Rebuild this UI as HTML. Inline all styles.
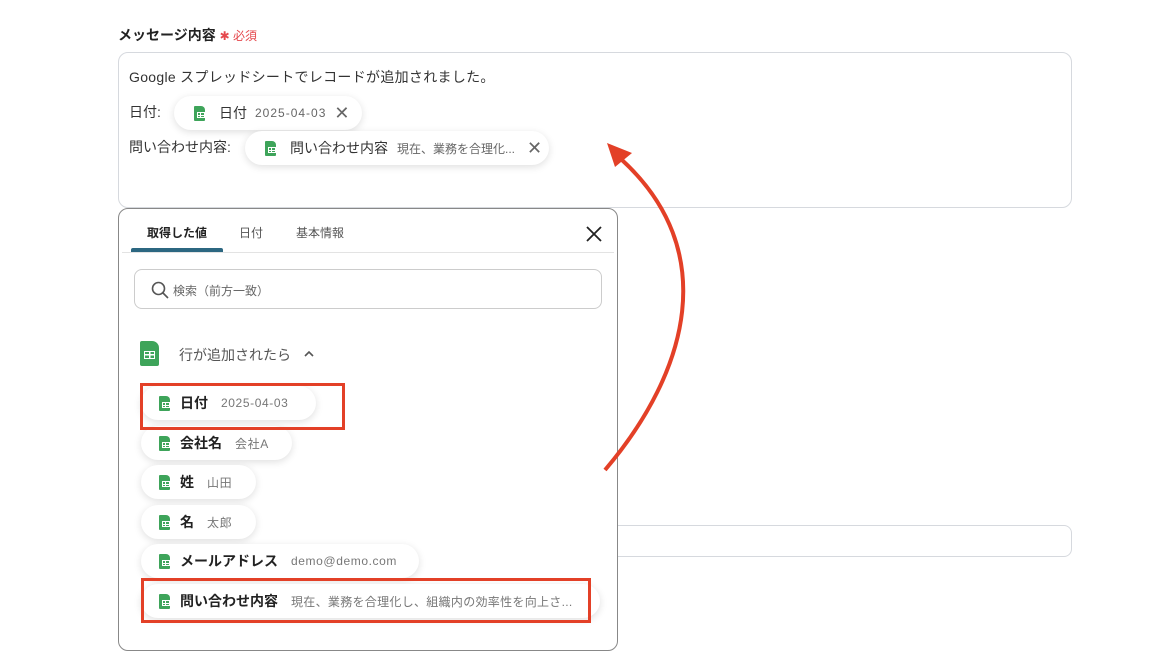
<!DOCTYPE html><html><head><meta charset="utf-8"><style>
*{box-sizing:border-box;margin:0;padding:0}
body{width:1154px;height:668px;background:#fff;font-family:"Liberation Sans","Noto Sans CJK JP",sans-serif;position:relative;overflow:hidden;color:#333}
.a{position:absolute}
.chip{position:absolute;height:34px;border-radius:17px;background:#fff;box-shadow:0 2px 8px rgba(0,0,0,.13);display:flex;align-items:center;white-space:nowrap}
.ic{display:inline-block;width:11px;height:15px;background:#3ea45a;border-radius:1px 4px 1px 1px;position:relative;flex:none}
.ic:after{content:"";position:absolute;left:2.5px;top:6.5px;width:6px;height:4px;border:1px solid #fff;background:linear-gradient(#fff,#fff) 50% 0/1px 100% no-repeat,linear-gradient(#fff,#fff) 0 50%/100% 1px no-repeat}
.k{font-weight:bold;font-size:14px;color:#222;margin-left:10px}
.v{font-size:12px;color:#777;margin-left:13px;letter-spacing:.6px}
.red{position:absolute;border:3px solid #e34027}
</style></head><body>
<div class="a" style="left:118px;top:25px;font-size:14px;font-weight:bold;color:#222">メッセージ内容 <span style="color:#e5484d;font-size:12px;font-weight:normal">✱ 必須</span></div>
<div class="a" style="left:118px;top:52px;width:954px;height:156px;border:1px solid #d6d9de;border-radius:10px"></div>
<div class="a" style="left:129px;top:67px;font-size:14px;color:#333;letter-spacing:.3px">Google スプレッドシートでレコードが追加されました。</div>
<div class="a" style="left:129px;top:102px;font-size:14px">日付:</div>
<div class="chip" style="left:174px;top:96px;width:188px;padding-left:20px"><span class="ic"></span><span style="margin-left:14px;font-size:14px">日付</span><span style="margin-left:8px;font-size:12px;color:#666;letter-spacing:1px">2025-04-03</span><span style="margin-left:8px;font-size:18px;color:#666">✕</span></div>
<div class="a" style="left:129px;top:137px;font-size:14px">問い合わせ内容:</div>
<div class="chip" style="left:245px;top:131px;width:304px;padding-left:20px"><span class="ic"></span><span style="margin-left:14px;font-size:14px">問い合わせ内容</span><span style="margin-left:9px;font-size:12px;color:#666">現在、業務を合理化...</span><span style="margin-left:12px;font-size:18px;color:#666">✕</span></div>
<div class="a" style="left:600px;top:525px;width:472px;height:32px;border:1px solid #d6d9de;border-radius:8px"></div>
<div class="a" style="left:118px;top:208px;width:500px;height:443px;border:1px solid #888;border-radius:10px;background:#fff"></div>
<div class="a" style="left:147px;top:224px;font-size:12px;font-weight:bold;color:#222">取得した値</div>
<div class="a" style="left:239px;top:224px;font-size:12px;color:#555">日付</div>
<div class="a" style="left:296px;top:224px;font-size:12px;color:#555">基本情報</div>
<div class="a" style="left:131px;top:248px;width:92px;height:4px;background:#2c6781;border-radius:2px 2px 0 0"></div>
<div class="a" style="left:122px;top:252px;width:492px;height:1px;background:#e3e3e3"></div>
<svg class="a" style="left:585px;top:225px" width="18" height="18"><path d="M2 2L16 16M16 2L2 16" stroke="#222" stroke-width="1.8"/></svg>
<div class="a" style="left:134px;top:269px;width:468px;height:40px;border:1px solid #ccc;border-radius:8px"></div>
<svg class="a" style="left:151px;top:281px" width="18" height="18"><circle cx="7.5" cy="7.5" r="6" fill="none" stroke="#555" stroke-width="1.6"/><path d="M12 12L17 17" stroke="#555" stroke-width="1.6"/></svg>
<div class="a" style="left:173px;top:282px;font-size:12px;color:#666">検索（前方一致）</div>
<div class="a" style="left:140px;top:341px;width:19px;height:25px;background:#3ea45a;border-radius:2px 7px 2px 2px"><div style="position:absolute;left:4px;top:10px;width:11px;height:8px;border:1.5px solid #fff;background:linear-gradient(#fff,#fff) 50% 0/1.5px 100% no-repeat,linear-gradient(#fff,#fff) 0 50%/100% 1.5px no-repeat"></div></div>
<div class="a" style="left:179px;top:345px;font-size:14px;color:#555">行が追加されたら</div>
<svg class="a" style="left:303px;top:349px" width="12" height="10"><path d="M2 7L6 3L10 7" fill="none" stroke="#555" stroke-width="1.6"/></svg>
<div class="chip" style="left:141px;top:386px;width:175px;padding-left:18px"><span class="ic"></span><span class="k">日付</span><span class="v">2025-04-03</span></div>
<div class="chip" style="left:141px;top:426px;width:151px;padding-left:18px"><span class="ic"></span><span class="k">会社名</span><span class="v">会社A</span></div>
<div class="chip" style="left:141px;top:465px;width:115px;padding-left:18px"><span class="ic"></span><span class="k">姓</span><span class="v">山田</span></div>
<div class="chip" style="left:141px;top:505px;width:115px;padding-left:18px"><span class="ic"></span><span class="k">名</span><span class="v">太郎</span></div>
<div class="chip" style="left:141px;top:544px;width:278px;padding-left:18px"><span class="ic"></span><span class="k">メールアドレス</span><span class="v">demo@demo.com</span></div>
<div class="chip" style="left:141px;top:584px;width:459px;padding-left:18px"><span class="ic"></span><span class="k">問い合わせ内容</span><span class="v" style="letter-spacing:.3px">現在、業務を合理化し、組織内の効率性を向上さ...</span></div>
<div class="red" style="left:140px;top:383px;width:205px;height:47px"></div>
<div class="red" style="left:141px;top:578px;width:450px;height:45px"></div>
<svg class="a" style="left:0;top:0" width="1154" height="668"><path d="M605 470C690 370 720 250 622 160" fill="none" stroke="#e34027" stroke-width="4"/><path d="M607 143L632 153L615 167Z" fill="#e34027"/></svg>
</body></html>
